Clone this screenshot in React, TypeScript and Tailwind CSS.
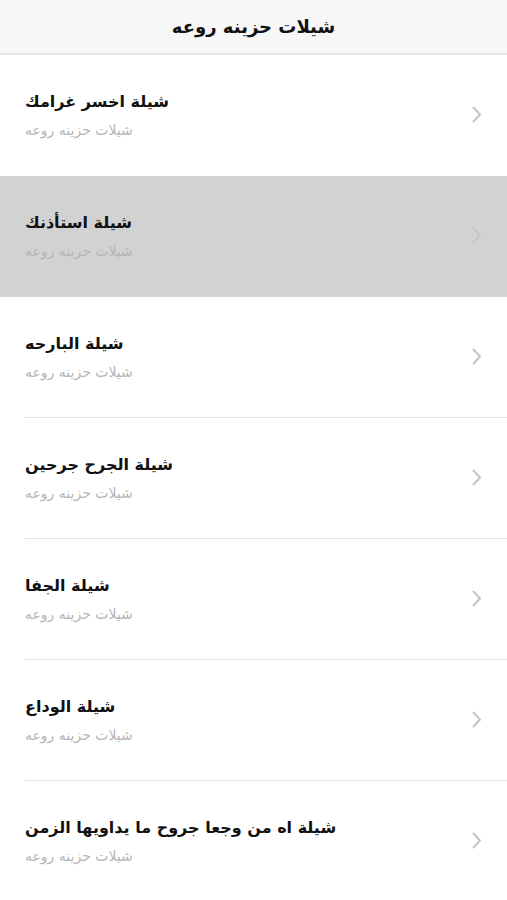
import React from "react";

const items = [
  "شيلة اخسر غرامك",
  "شيلة استأذنك",
  "شيلة البارحه",
  "شيلة الجرح جرحين",
  "شيلة الجفا",
  "شيلة الوداع",
  "شيلة اه من وجعا جروح ما يداويها الزمن",
];

function Chevron() {
  return (
    <svg width="10" height="17" viewBox="0 0 10 17" fill="none" className="-mt-[2px]">
      <path d="M1.5 1.5 L8 8.5 L1.5 15.5" stroke="#c4c4c8" strokeWidth="2" strokeLinecap="round" strokeLinejoin="round" />
    </svg>
  );
}

export default function App() {
  return (
    <div className="w-[507px] h-[900px] overflow-hidden bg-white" style={{ fontFamily: '"DejaVu Sans", "Noto Sans", sans-serif' }}>
      <div className="h-[55px] bg-[#f7f7f7] border-b-2 border-[#e6e6e6] flex items-center justify-center">
        <span dir="rtl" className="text-[18px] font-bold text-[#111]">شيلات حزينه روعه</span>
      </div>
      {items.map((t, i) => (
        <div key={i} className={i === 1 ? "bg-[#d2d2d2]" : "bg-white"}>
          <div className="h-[120px] flex items-center pl-[25px] pr-[25px]">
            <div className="flex-1 flex flex-col items-start pt-[1px]">
              <span dir="rtl" className="text-[16px] font-bold text-[#111] leading-[22px]">{t}</span>
              <span dir="rtl" className="text-[14px] text-[#b5b5b5] leading-[20px] mt-[7px]">شيلات حزينه روعه</span>
            </div>
            <Chevron />
          </div>
          <div className={i === 0 || i === 1 ? "h-px" : "h-px ml-[25px] bg-[#e3e3e3]"} />
        </div>
      ))}
    </div>
  );
}
